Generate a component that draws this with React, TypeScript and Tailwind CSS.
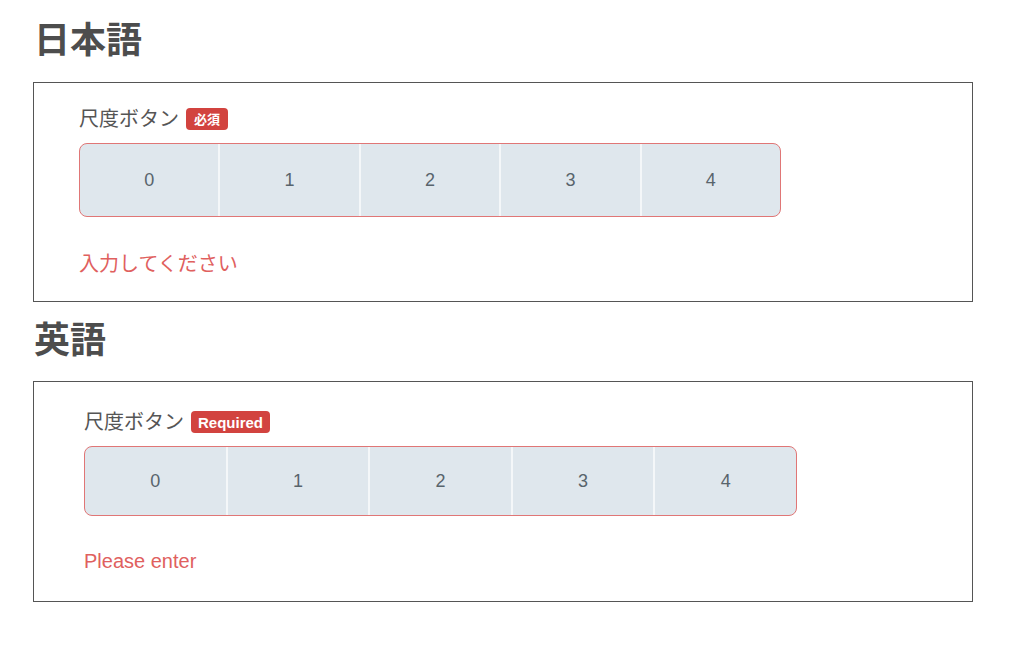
import React from 'react';

const FONT = { fontFamily: '"Liberation Sans", "Noto Sans CJK JP", sans-serif' };

type ScaleProps = {
  badge: string;
  error: string;
  wide?: boolean;
};

function ScaleField({ badge, error, wide }: ScaleProps) {
  return (
    <div className={`border border-[#555] w-[940px] ${wide ? 'h-[221px] pl-[50px] pt-[25px]' : 'h-[220px] pl-[45px] pt-[21px]'}`}>
      <div className="flex items-center gap-[7px] h-[30px]">
        <span className="text-[20px] text-[#555] leading-none">尺度ボタン</span>
        <span
          className={`bg-[#d2433f] text-white font-bold rounded-[4px] h-[22px] flex items-center leading-none ${
            wide ? 'text-[15px] px-[7px]' : 'text-[13px] px-[8px]'
          }`}
        >
          {badge}
        </span>
      </div>
      <div
        className={`flex border border-[#e07676] rounded-[8px] overflow-hidden bg-[#dfe7ed] ${
          wide ? 'w-[713px] h-[70px] mt-[9px]' : 'w-[702px] h-[74px] mt-[9px]'
        }`}
      >
        {[0, 1, 2, 3, 4].map((n) => (
          <div
            key={n}
            className={`flex-1 flex items-center justify-center text-[18px] text-[#58646c] ${
              n > 0 ? 'border-l-2 border-[#f4f7f9]' : ''
            }`}
          >
            {n}
          </div>
        ))}
      </div>
      <div className={`text-[20px] text-[#e0605e] leading-[30px] ${wide ? 'mt-[30px]' : 'mt-[32px]'}`}>{error}</div>
    </div>
  );
}

export default function App() {
  return (
    <div className="bg-white w-[1024px] h-[651px] pl-[33px]" style={FONT}>
      <h1 className="text-[36px] font-bold text-[#4d4d4d] leading-[40px] pt-[21px] pb-[21px] pl-[1px]">日本語</h1>
      <ScaleField badge="必須" error="入力してください" />
      <h1 className="text-[36px] font-bold text-[#4d4d4d] leading-[40px] pt-[19px] pb-[20px] pl-[1px]">英語</h1>
      <ScaleField badge="Required" error="Please enter" wide />
    </div>
  );
}
